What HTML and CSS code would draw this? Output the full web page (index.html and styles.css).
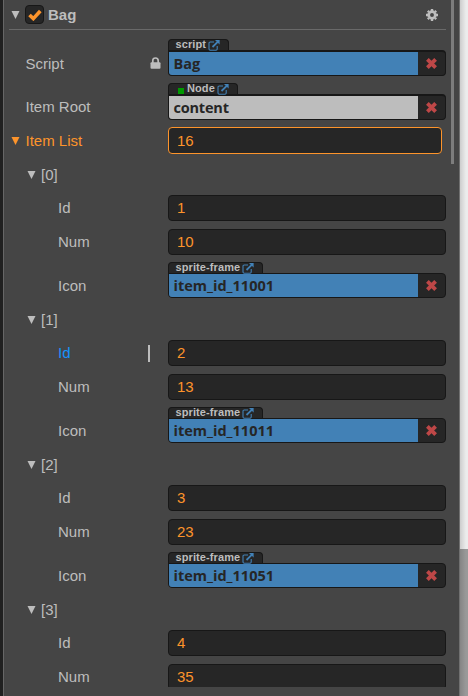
FILE: index.html
```html
<!DOCTYPE html>
<html lang="en">
<head>
<meta charset="utf-8">
<title>Bag</title>
<link rel="stylesheet" href="styles.css">
</head>
<body>
<svg class="defs" aria-hidden="true">
  <symbol id="link" viewBox="0 0 12 11"><path d="M6 2H2.2Q1 2 1 3.2V9Q1 10.2 2.2 10.2H8Q9.2 10.2 9.2 9V6" fill="none" stroke="currentColor" stroke-width="1.1"/><path d="M4.5 7L10 1.6" stroke="currentColor" stroke-width="1.8"/><path d="M7 0H11.6V4.6Z" fill="currentColor"/></symbol>
  <symbol id="cross" viewBox="0 0 12 12"><path d="M2.2 2.2L9.8 9.8M9.8 2.2L2.2 9.8" stroke="currentColor" stroke-width="3.5"/></symbol>
  <symbol id="down" viewBox="0 0 8 8"><path d="M0 0H8L4 8Z" fill="currentColor"/></symbol>
</svg>
<div class="window">
  <main class="panel">
    <div class="view">
      <header class="header">
        <svg class="arrow"><use href="#down"/></svg>
        <span class="check"><svg viewBox="0 0 14 12"><path d="M1.5 6L5.3 9.6L12.3 2" fill="none" stroke="currentColor" stroke-width="3.6"/></svg></span>
        <span class="title">Bag</span>
        <svg class="gear" viewBox="0 0 12 12"><circle cx="6" cy="6" r="3.3" fill="none" stroke="currentColor" stroke-width="2.7"/><path d="M6 0V2M6 10V12M0 6H2M10 6H12M1.8 1.8L3 3M9 9L10.2 10.2M1.8 10.2L3 9M9 3L10.2 1.8" stroke="currentColor" stroke-width="2.4"/></svg>
      </header>

      <div class="row asset first">
        <span class="label">Script</span>
        <svg class="lock" viewBox="0 0 10 12"><path d="M2.3 6V3.8Q2.3 1 5 1T7.7 3.8V6" fill="none" stroke="currentColor" stroke-width="1.7"/><rect y="5.3" width="10" height="6.4" rx="1" fill="currentColor"/></svg>
        <div class="field"><div class="tab">script<svg><use href="#link"/></svg></div><div class="box"><span class="value">Bag</span><span class="clear"><svg viewBox="0 0 12 12"><use href="#cross"/></svg></span></div></div>
      </div>
      <div class="row asset root">
        <span class="label">Item Root</span>
        <div class="field"><div class="tab node"><i></i>Node<svg><use href="#link"/></svg></div><div class="box"><span class="value gray">content</span><span class="clear"><svg viewBox="0 0 12 12"><use href="#cross"/></svg></span></div></div>
      </div>
      <div class="row list">
        <svg class="arrow"><use href="#down"/></svg><span class="label">Item List</span>
        <div class="input focus">16</div>
      </div>

      <section class="item">
        <div class="group"><svg class="arrow"><use href="#down"/></svg><span>[0]</span></div>
        <div class="row child"><span class="label">Id</span><div class="input">1</div></div>
        <div class="row child"><span class="label">Num</span><div class="input">10</div></div>
        <div class="row child asset"><span class="label">Icon</span><div class="field"><div class="tab">sprite-frame<svg><use href="#link"/></svg></div><div class="box"><span class="value">item_id_11001</span><span class="clear"><svg viewBox="0 0 12 12"><use href="#cross"/></svg></span></div></div></div>
      </section>
      <section class="item">
        <div class="group"><svg class="arrow"><use href="#down"/></svg><span>[1]</span></div>
        <div class="row child hover"><span class="label">Id</span><span class="grip"></span><div class="input">2</div></div>
        <div class="row child"><span class="label">Num</span><div class="input">13</div></div>
        <div class="row child asset"><span class="label">Icon</span><div class="field"><div class="tab">sprite-frame<svg><use href="#link"/></svg></div><div class="box"><span class="value">item_id_11011</span><span class="clear"><svg viewBox="0 0 12 12"><use href="#cross"/></svg></span></div></div></div>
      </section>
      <section class="item">
        <div class="group"><svg class="arrow"><use href="#down"/></svg><span>[2]</span></div>
        <div class="row child"><span class="label">Id</span><div class="input">3</div></div>
        <div class="row child"><span class="label">Num</span><div class="input">23</div></div>
        <div class="row child asset"><span class="label">Icon</span><div class="field"><div class="tab">sprite-frame<svg><use href="#link"/></svg></div><div class="box"><span class="value">item_id_11051</span><span class="clear"><svg viewBox="0 0 12 12"><use href="#cross"/></svg></span></div></div></div>
      </section>
      <section class="item">
        <div class="group"><svg class="arrow"><use href="#down"/></svg><span>[3]</span></div>
        <div class="row child"><span class="label">Id</span><div class="input">4</div></div>
        <div class="row child"><span class="label">Num</span><div class="input">35</div></div>
      </section>
    </div>
    <div class="scrollbar"></div>
  </main>
  <aside class="outside"></aside>
</div>
</body>
</html>
```
FILE: styles.css
```css
* { box-sizing: border-box; }
body { margin: 0; background: #202020; font: 15px/18px "Liberation Sans", Arial, sans-serif; color: #bdbdbd; }
svg { display: block; flex: none; }
.defs { position: absolute; width: 0; height: 0; }
.window { display: flex; width: 468px; height: 696px; padding-left: 3px; overflow: hidden; }
.panel { display: flex; width: 457px; height: 696px; background: #454545; border-left: 1px solid #666; border-right: 1px solid #707070; }
.view { width: 442px; height: 687px; overflow: hidden; }
.scrollbar { width: 3px; height: 164px; margin-left: 5px; background: #7d7d7d; }
.outside { flex: 1; background: linear-gradient(to right, #0002, #0000 6px), linear-gradient(#ececec 549px, #999 549px); }
.header { display: flex; align-items: center; height: 30px; margin-left: 5px; border-bottom: 1px solid #696969; padding: 0 8px 0 2px; }
.arrow { width: 9px; height: 8px; }
.check { display: flex; align-items: center; justify-content: center; width: 19px; height: 19px; margin-left: 5px; background: #262626; border: 1px solid #171717; border-radius: 4px; color: #fd942b; }
.check svg { width: 14px; height: 12px; }
.title { margin-left: 4px; font-weight: bold; }
.gear { width: 12px; height: 12px; margin-left: auto; }
.row { display: flex; align-items: center; height: 26px; margin-bottom: 8px; padding-left: 21.5px; }
.row .input, .row .field { width: 278px; margin-left: auto; }
.asset { height: 36px; align-items: flex-start; }
.asset .label { padding-top: 15px; }
.first { height: 37px; margin: 9px 0 7px; }
.first .label { padding-top: 16px; }
.lock { width: 11px; height: 12px; margin: 18px 7px 0 auto; }
.row.first .field { margin-left: 0; }
.root { height: 37px; margin-bottom: 7px; }
.list { height: 27px; margin: 0; padding: 0 4px 0 7px; color: #fd942b; }
.list .label { margin-left: 5.5px; }
.input { height: 26px; padding: 3px 8px; background: #262626; border: 1px solid #171717; border-radius: 4px; color: #fd942b; }
.list .input { width: 274px; height: 27px; padding-top: 4px; }
.row .focus { border-color: #fd942b; }
.tab { display: flex; align-items: flex-start; width: max-content; height: 12px; padding: 0 8px 0 6.5px; background: #262626; border: 1px solid #171717; border-bottom: 0; border-radius: 4px 4px 0 0; font: bold 11px/9px "Liberation Sans", Arial, sans-serif; letter-spacing: .1px; }
.tab svg { width: 12px; height: 11px; margin-left: 2px; color: #4281b6; }
.node { padding-left: 9px; }
.node i { width: 6px; height: 6px; margin: 4px 3px 0 0; background: #009900; }
.box { display: flex; height: 26px; margin-top: -1px; border: 1px solid #171717; border-top-width: 2px; border-radius: 0 4px 4px 4px; background: #262626; overflow: hidden; }
.child .box { height: 25px; border-top-width: 1px; }
.value { width: 249px; padding-left: 4.5px; background: #4281b6; color: #262626; font: bold 14.5px/23px "Open Sans", "Noto Sans", sans-serif; }
.child .value { line-height: 24px; }
.gray { background: #bdbdbd; letter-spacing: -.2px; }
.clear { flex: 1; display: flex; align-items: center; justify-content: center; color: #be4747; }
.clear svg { width: 13px; height: 13px; margin-right: 1px; }
.group { display: flex; align-items: center; height: 42px; padding: 1px 0 0 23px; }
.group span { margin-left: 5px; }
.item:nth-of-type(1) .group { height: 41px; }
.child { padding-left: 54px; }
.child.asset { margin: -1px 0 0; }
.hover .label { color: #1592fb; }
.grip { width: 2px; height: 17px; margin: 0 18px 0 auto; background: #bdbdbd; }
.row.hover .input { margin-left: 0; }
```
